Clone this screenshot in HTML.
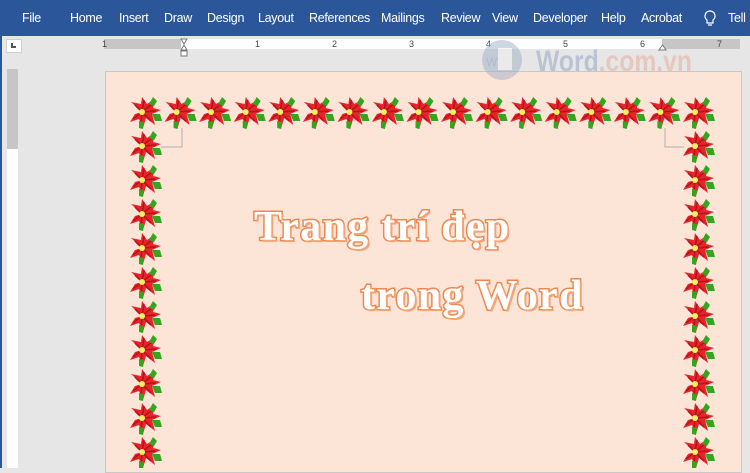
<!DOCTYPE html>
<html><head><meta charset="utf-8"><style>
body{margin:0;width:750px;height:468px;overflow:hidden;background:#e6e6e6;font-family:"Liberation Sans",sans-serif;position:relative}
.rib{position:absolute;left:0;top:0;width:750px;height:36px;background:#2b579a}
.rib span{position:absolute;top:11px;color:#fff;font-size:12.5px;letter-spacing:-0.3px}
.page{position:absolute;left:105px;top:71px;width:635px;height:400px;background:#fce4d6;border:1px solid #c8c8c8}
.t{position:absolute;font-family:"Liberation Serif",serif;font-weight:bold;font-size:42px;color:#fff;-webkit-text-stroke:3px #ec8750;paint-order:stroke fill;text-shadow:2px 2px 0 #f2a474;letter-spacing:1.3px;white-space:nowrap}
</style></head><body>
<div class="rib">
<span style="left:22px">File</span><span style="left:70px">Home</span><span style="left:119px">Insert</span><span style="left:164px">Draw</span><span style="left:207px">Design</span><span style="left:258px">Layout</span><span style="left:309px">References</span><span style="left:381px">Mailings</span><span style="left:441px">Review</span><span style="left:492px">View</span><span style="left:533px">Developer</span><span style="left:601px">Help</span><span style="left:641px">Acrobat</span>
<svg style="position:absolute;left:703px;top:10px" width="14" height="18"><path d="M7 1a5 5 0 0 0-3 9v3h6v-3a5 5 0 0 0-3-9zM5 15h4" stroke="#fff" fill="none" stroke-width="1.2"/></svg>
<span style="left:728px">Tell</span>
</div>
<div style="position:absolute;left:6px;top:39px;width:14px;height:12px;background:#fff;border:1px solid #d0d0d0"><div style="position:absolute;left:4px;top:3px;width:5px;height:5px;border-left:2px solid #555;border-bottom:2px solid #555;box-sizing:border-box"></div></div>
<div style="position:absolute;left:104px;top:39px;width:77px;height:10px;background:#c6c6c6"></div>
<div style="position:absolute;left:181px;top:39px;width:481px;height:10px;background:#fff"></div>
<div style="position:absolute;left:662px;top:39px;width:78px;height:10px;background:#c6c6c6"></div>
<svg style="position:absolute;left:100px;top:37px" width="650" height="22" font-family="Liberation Sans" font-size="9" fill="#444">
<text x="2" y="10">1</text><text x="155" y="10">1</text><text x="232" y="10">2</text><text x="309" y="10">3</text><text x="386" y="10">4</text><text x="463" y="10">5</text><text x="540" y="10">6</text><text x="617" y="10">7</text>
<path d="M81 2h6l-3 5zM81 13h6l-3-5z" fill="#fff" stroke="#777"/><rect x="81" y="14" width="6" height="5" fill="#fff" stroke="#777"/>
<path d="M559 13h7l-3.5-5z" fill="#fff" stroke="#777"/>
</svg>
<div style="position:absolute;left:0;top:36px;width:2px;height:432px;background:#2b579a"></div>
<div style="position:absolute;left:7px;top:69px;width:11px;height:80px;background:#c6c6c6"></div>
<div style="position:absolute;left:7px;top:149px;width:11px;height:319px;background:#fff"></div>
<div class="page"></div>
<svg style="position:absolute;left:470px;top:38px;opacity:.5" width="240" height="45"><circle cx="32" cy="22" r="20" fill="#9fb0c8"/><rect x="28" y="10" width="14" height="22" fill="#eee"/><text x="16" y="28" font-size="12" fill="#7a8fb0">W</text><text x="66" y="33" font-size="30" font-weight="bold" fill="#8ea2c4" font-family="Liberation Sans" textLength="156" lengthAdjust="spacingAndGlyphs">Word<tspan fill="#e7a996">.com.vn</tspan></text></svg>
<svg style="position:absolute;left:0;top:0" width="750" height="468">
<defs><g id="f">
<path d="M12 15L1 5L11 7L12 0L17 7L25 2L23 11L31 13L22 17L25 28L16 21L13 31L9 22L0 25L5 17Z" fill="#e8232a"/>
<path d="M12 15L5 8M12 15L14 3M12 15L23 6M12 15L26 14M12 15L21 24M12 15L11 27M12 15L3 22" stroke="#b3151a" stroke-width="1.6"/>
<path d="M19 7L23 0L27 4L24 9Z" fill="#34a51c"/>
<path d="M22 17L30 17L32 24L25 24Z" fill="#34a51c"/>
<path d="M9 24L14 25L13 32L9 31Z" fill="#34a51c"/>
<circle cx="12" cy="15" r="3" fill="#f3f060"/>
</g></defs>
<use href="#f" x="130" y="97"/><use href="#f" x="164.6" y="97"/><use href="#f" x="199.1" y="97"/><use href="#f" x="233.7" y="97"/><use href="#f" x="268.2" y="97"/><use href="#f" x="302.8" y="97"/><use href="#f" x="337.4" y="97"/><use href="#f" x="371.9" y="97"/><use href="#f" x="406.5" y="97"/><use href="#f" x="441" y="97"/><use href="#f" x="475.6" y="97"/><use href="#f" x="510.2" y="97"/><use href="#f" x="544.7" y="97"/><use href="#f" x="579.3" y="97"/><use href="#f" x="613.8" y="97"/><use href="#f" x="648.4" y="97"/><use href="#f" x="683" y="97"/>
<use href="#f" x="130" y="131"/><use href="#f" x="130" y="165"/><use href="#f" x="130" y="199"/><use href="#f" x="130" y="233"/><use href="#f" x="130" y="267"/><use href="#f" x="130" y="301"/><use href="#f" x="130" y="335"/><use href="#f" x="130" y="369"/><use href="#f" x="130" y="403"/><use href="#f" x="130" y="437"/>
<use href="#f" x="683" y="131"/><use href="#f" x="683" y="165"/><use href="#f" x="683" y="199"/><use href="#f" x="683" y="233"/><use href="#f" x="683" y="267"/><use href="#f" x="683" y="301"/><use href="#f" x="683" y="335"/><use href="#f" x="683" y="369"/><use href="#f" x="683" y="403"/><use href="#f" x="683" y="437"/>
<path d="M161 147H182V128M665 128V147H684" stroke="#b0b0b0" fill="none"/>
</svg>
<div class="t" style="left:254px;top:203px">Trang trí đẹp</div>
<div class="t" style="left:361px;top:272px">trong Word</div>
</body></html>
